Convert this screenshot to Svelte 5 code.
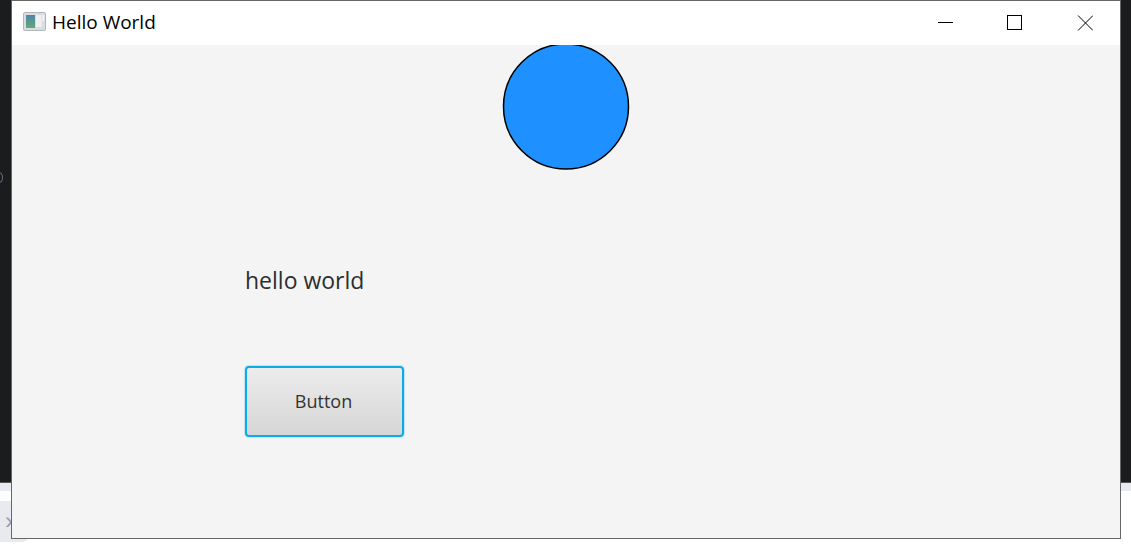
<script>
  const title = 'Hello World';
</script>

<div class="desktop">
  <div class="backdrop-top">
    <span class="edge-glyph"></span>
  </div>
  <div class="backdrop-bottom">
    <div class="strip"></div>
    <div class="white-row"></div>
    <div class="panel"><span class="chev">›</span></div>
  </div>

  <div class="window">
    <header class="titlebar">
      <div class="title-left">
        <svg class="app-icon" width="24" height="20" viewBox="0 0 24 20">
          <defs>
            <linearGradient id="pic" x1="0" y1="0" x2="0" y2="1">
              <stop offset="0" stop-color="#4f86a8" />
              <stop offset="1" stop-color="#62aa78" />
            </linearGradient>
          </defs>
          <rect x="0.5" y="0.5" width="22" height="18" rx="1.5" fill="#d9dde2" stroke="#b3b6ba" />
          <rect x="3" y="3" width="9" height="13" fill="url(#pic)" />
          <rect x="13" y="3" width="5.5" height="12" fill="#eef1f0" />
          <rect x="19.5" y="3" width="1.5" height="6" fill="#f6f7f7" />
        </svg>
        <span class="title">{title}</span>
      </div>
      <div class="controls">
        <span class="ctl">
          <svg width="16" height="16" viewBox="0 0 16 16" shape-rendering="crispEdges"><path d="M1 7.5h15" stroke="#000" fill="none" /></svg>
        </span>
        <span class="ctl">
          <svg width="16" height="16" viewBox="0 0 16 16" shape-rendering="crispEdges"><rect x="0.5" y="0.5" width="14" height="14" stroke="#000" fill="none" /></svg>
        </span>
        <span class="ctl">
          <svg width="16" height="16" viewBox="0 0 16 16"><path d="M1 0.5l15 15M16 0.5l-15 15" stroke="#000" fill="none" /></svg>
        </span>
      </div>
    </header>
    <main class="scene">
      <svg class="circle" width="128" height="128" viewBox="0 0 128 128">
        <circle cx="64" cy="62.5" r="62.5" fill="#1e90ff" stroke="#000" stroke-width="1.5" />
      </svg>
      <div class="label">hello world</div>
      <button class="btn" type="button">Button</button>
    </main>
  </div>
</div>

<style>
  :global(body) {
    margin: 0;
    overflow: hidden;
  }
  .desktop {
    position: relative;
    width: 1131px;
    height: 549px;
    display: flex;
    flex-direction: column;
    background: #fff;
    overflow: hidden;
  }
  .backdrop-top {
    height: 482px;
    background: #1a1c1e;
    border-bottom: 1px solid #55575a;
    position: relative;
  }
  .edge-glyph {
    position: absolute;
    left: -5px;
    top: 172px;
    width: 6px;
    height: 9px;
    border: 1px solid #6d7078;
    border-radius: 50%;
  }
  .backdrop-bottom {
    flex: 1;
    display: flex;
    flex-direction: column;
  }
  .strip {
    height: 8px;
    background: #e9eaf0;
  }
  .white-row {
    height: 10px;
    background: #fff;
  }
  .panel {
    width: 28px;
    height: 41px;
    background: #e9eaf0;
    border-radius: 0 0 6px 0;
    font: 24px "Liberation Sans", sans-serif;
    color: #9a9ba8;
    text-align: right;
    box-sizing: border-box;
    padding: 6px 15px 0 0;
  }
  .chev {
    display: inline-block;
  }
  .window {
    position: absolute;
    left: 11px;
    top: 0;
    width: 1110px;
    height: 539px;
    box-sizing: border-box;
    border: 1px solid #666;
    display: flex;
    flex-direction: column;
    background: #f4f4f4;
  }
  .titlebar {
    height: 44px;
    flex: none;
    background: #fff;
    display: flex;
    align-items: center;
    justify-content: space-between;
  }
  .title-left {
    display: flex;
    align-items: center;
    gap: 5px;
    padding-left: 11px;
  }
  .app-icon {
    display: block;
    margin-bottom: 2px;
  }
  .title {
    font: 19px "Open Sans", sans-serif;
    color: #000;
    padding-bottom: 2px;
  }
  .controls {
    display: flex;
  }
  .ctl {
    width: 70px;
    height: 44px;
    display: flex;
    align-items: center;
    justify-content: center;
  }
  .ctl svg {
    display: block;
  }
  .scene {
    position: relative;
    flex: 1;
    overflow: hidden;
  }
  .circle {
    position: absolute;
    left: 490px;
    top: -1px;
  }
  .label {
    position: absolute;
    left: 233px;
    top: 219px;
    font: 23px "Open Sans", sans-serif;
    color: #2e2e2e;
  }
  .btn {
    position: absolute;
    left: 233px;
    top: 321px;
    width: 159px;
    height: 71px;
    box-sizing: border-box;
    border: 2px solid #0fa9e6;
    border-radius: 4px;
    box-shadow: 0 0 1px 1px #bfe3f2;
    background: linear-gradient(#ececec, #d6d6d6);
    font: 18px "Open Sans", sans-serif;
    color: #333;
    padding: 0 2px 2px 0;
  }
</style>
